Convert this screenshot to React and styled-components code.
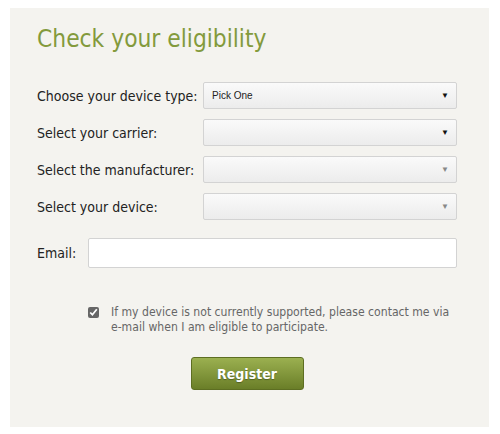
import styled, { createGlobalStyle } from 'styled-components';

const Global = createGlobalStyle`
  body {
    margin: 0;
    background: #fff;
    font-family: "DejaVu Sans Condensed", "DejaVu Sans", sans-serif;
  }
`

const Page = styled.div`
  padding: 8px 0 0 10px;
`

const Panel = styled.form`
  box-sizing: border-box;
  width: 479px;
  height: 419px;
  background: #f4f3ef;
  padding: 15px 32px 0 27px;
`

const Title = styled.h2`
  margin: 0 0 27px;
  font-weight: normal;
  font-size: 24.3px;
  line-height: 32px;
  color: #839a3c;
`

const Row = styled.div`
  display: flex;
  align-items: center;
  margin-bottom: 10px;
`

const Label = styled.label`
  width: ${p => p.width || 166}px;
  flex-shrink: 0;
  font-size: 14px;
  color: #222;
`

const Select = styled.div`
  box-sizing: border-box;
  flex: 1;
  height: 27px;
  display: flex;
  align-items: center;
  justify-content: space-between;
  padding: 0 7px 0 8px;
  border: 1px solid #d3d3d3;
  border-radius: 2px;
  background: linear-gradient(#fafafa, #ececec);
  font-family: "Liberation Sans", Arial, sans-serif;
  font-size: 10px;
  color: #222;
`

const Arrow = styled.span`
  font-size: 8px;
  color: ${p => (p.disabled ? '#888' : '#111')};
`

const EmailRow = styled(Row)`
  margin-top: 18px;
  margin-bottom: 0;
`

const Input = styled.input`
  box-sizing: border-box;
  flex: 1;
  height: 30px;
  border: 1px solid #d3d3d3;
  border-radius: 2px;
  background: #fff;
`

const Notice = styled.div`
  display: flex;
  align-items: flex-start;
  gap: 12px;
  margin: 37px 0 0 51px;
  font-size: 12.1px;
  line-height: 15px;
  color: #666;
`

const Check = styled.input`
  margin: 2px 0 0;
  width: 11px;
  height: 11px;
  accent-color: #666;
`

const ButtonRow = styled.div`
  display: flex;
  justify-content: center;
  margin-top: 22px;
`

const Button = styled.button`
  width: 113px;
  height: 33px;
  border: 1px solid #5d6e22;
  border-radius: 3px;
  background: linear-gradient(#9bb050, #6a7e28);
  color: #fff;
  font-family: "DejaVu Sans Condensed", "DejaVu Sans", sans-serif;
  font-weight: bold;
  font-size: 14px;
  text-shadow: 0 1px 1px rgba(0,0,0,0.3);
`

const selects = [
  { label: 'Choose your device type:', value: 'Pick One' },
  { label: 'Select your carrier:', value: '' },
  { label: 'Select the manufacturer:', value: '', disabled: true },
  { label: 'Select your device:', value: '', disabled: true },
]

function App () {
  return (
    <Page>
      <Global />
      <Panel>
        <Title>Check your eligibility</Title>
        {selects.map(s => (
          <Row key={s.label}>
            <Label>{s.label}</Label>
            <Select>
              <span>{s.value}</span>
              <Arrow disabled={s.disabled}>▼</Arrow>
            </Select>
          </Row>
        ))}
        <EmailRow>
          <Label width={51}>Email:</Label>
          <Input type="text" />
        </EmailRow>
        <Notice>
          <Check type="checkbox" defaultChecked />
          <span>If my device is not currently supported, please contact me via e-mail when I am eligible to participate.</span>
        </Notice>
        <ButtonRow>
          <Button type="button">Register</Button>
        </ButtonRow>
      </Panel>
    </Page>
  );
}

export default App;
